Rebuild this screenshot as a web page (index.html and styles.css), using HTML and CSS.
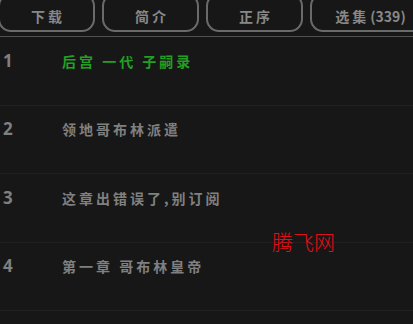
FILE: index.html
```html
<!DOCTYPE html>
<html lang="zh-CN">
<head>
<meta charset="utf-8">
<link rel="stylesheet" href="styles.css">
</head>
<body>
<div class="page">
  <div class="tabs">
    <div class="tab">下载</div>
    <div class="tab">简介</div>
    <div class="tab">正序</div>
    <div class="tab tab-wide">选集<span class="num">(339)</span></div>
  </div>
  <ul class="list">
    <li class="row current"><span class="idx">1</span><span class="title">后宫 一代 子嗣录</span></li>
    <li class="row"><span class="idx">2</span><span class="title">领地哥布林派遣</span></li>
    <li class="row"><span class="idx">3</span><span class="title">这章出错误了,别订阅</span></li>
    <li class="row"><span class="idx">4</span><span class="title">第一章 哥布林皇帝</span></li>
  </ul>
  <div class="watermark">腾飞网</div>
</div>
</body>
</html>
```
FILE: styles.css
```css
html, body {
  margin: 0;
  padding: 0;
  background: #171717;
}
.page {
  position: relative;
  width: 413px;
  height: 324px;
  overflow: hidden;
  font-family: "Noto Sans CJK SC", "Noto Sans", sans-serif;
}
.tabs {
  display: flex;
  gap: 7px;
  height: 36px;
  margin-left: -2px;
  border-bottom: 1px solid #505050;
}
.tab {
  flex: 0 0 auto;
  box-sizing: border-box;
  width: 97px;
  height: 39px;
  margin-top: -7px;
  padding-top: 7px;
  border: 2px solid #6a6a6a;
  border-radius: 13px;
  display: flex;
  align-items: center;
  justify-content: center;
  color: #888888;
  font-size: 14px;
  font-weight: 700;
  letter-spacing: 3px;
  text-indent: 3px;
}
.tab-wide {
  width: 118px;
}
.num {
  letter-spacing: 0;
  margin-left: -2px;
}
.list {
  list-style: none;
  margin: 0;
  padding: 0;
}
.row {
  display: flex;
  align-items: center;
  box-sizing: border-box;
  height: 68.5px;
  padding: 0 0 20px 3px;
  border-bottom: 1px solid #202020;
  color: #808080;
  font-weight: 700;
}
.idx {
  width: 59px;
  font-family: "Open Sans", "Noto Sans", sans-serif;
  font-size: 17px;
  line-height: 20px;
}
.title {
  font-size: 14px;
  line-height: 20px;
  letter-spacing: 3px;
}
.current .title {
  color: #22a022;
}
.watermark {
  position: absolute;
  left: 272px;
  top: 229px;
  font-size: 21px;
  line-height: 24px;
  color: #e0101a;
  font-weight: 300;
}
```
